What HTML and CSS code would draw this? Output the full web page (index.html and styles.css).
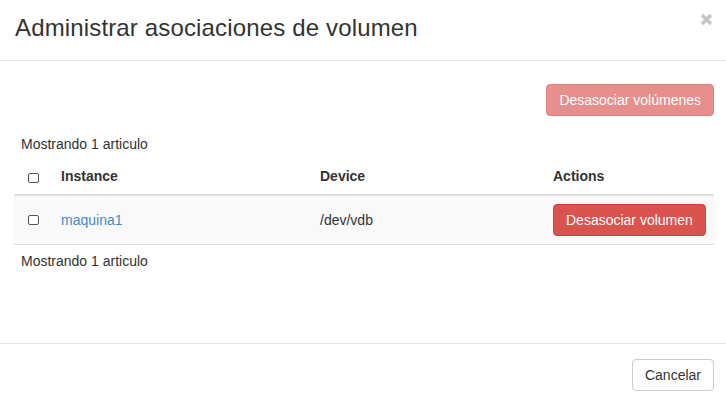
FILE: index.html
```html
<!DOCTYPE html>
<html lang="es">
<head>
<meta charset="utf-8">
<title>Administrar asociaciones de volumen</title>
<link rel="stylesheet" href="styles.css">
</head>
<body>
<div class="modal">
  <div class="modal-header">
    <h3 class="modal-title">Administrar asociaciones de volumen</h3>
    <span class="close" aria-label="Cerrar">
      <svg width="13" height="13" viewBox="0 0 13 13"><path d="M2 2 L11 11 M11 2 L2 11" stroke="#c4c4c4" stroke-width="3.4" stroke-linecap="butt"/></svg>
    </span>
  </div>
  <div class="modal-body">
    <div class="table-actions">
      <button class="btn btn-danger disabled">Desasociar volúmenes</button>
    </div>
    <div class="table-count">Mostrando 1 articulo</div>
    <table class="table">
      <colgroup>
        <col class="c-check">
        <col class="c-inst">
        <col class="c-dev">
        <col class="c-act">
      </colgroup>
      <thead>
        <tr>
          <th><span class="cb"></span></th>
          <th>Instance</th>
          <th>Device</th>
          <th>Actions</th>
        </tr>
      </thead>
      <tbody>
        <tr>
          <td><span class="cb"></span></td>
          <td><a href="#" class="link">maquina1</a></td>
          <td>/dev/vdb</td>
          <td><button class="btn btn-danger">Desasociar volumen</button></td>
        </tr>
      </tbody>
      <tfoot>
        <tr>
          <td colspan="4">Mostrando 1 articulo</td>
        </tr>
      </tfoot>
    </table>
  </div>
  <div class="modal-footer">
    <button class="btn btn-default">Cancelar</button>
  </div>
</div>
</body>
</html>
```

FILE: styles.css
```css
* { box-sizing: border-box; }
html, body {
  margin: 0;
  padding: 0;
  background: #fff;
}
body {
  font-family: "Liberation Sans", Arial, Helvetica, sans-serif;
  font-size: 14px;
  line-height: 20px;
  color: #333;
}
.modal {
  width: 726px;
}
.modal-header {
  position: relative;
  padding: 14px 15px;
  border-bottom: 1px solid #e5e5e5;
  height: 61px;
}
.modal-title {
  margin: 0;
  font-size: 24px;
  font-weight: 400;
  line-height: 28px;
  color: #333;
  letter-spacing: 0.15px;
}
.close {
  position: absolute;
  right: 13px;
  top: 13px;
  width: 13px;
  height: 13px;
  display: block;
}
.close svg { display: block; }
.modal-body {
  height: 282px;
  padding: 0 12px 0 14px;
}
.table-actions {
  display: flex;
  justify-content: flex-end;
  padding-top: 23px;
}
.table-count {
  margin-top: 18px;
  padding-left: 7px;
  height: 24px;
}
.btn {
  font-family: "Liberation Sans", Arial, Helvetica, sans-serif;
  font-size: 14px;
  line-height: 20px;
  padding: 5px 12px;
  border: 1px solid transparent;
  border-radius: 4px;
  cursor: pointer;
  display: inline-block;
}
.btn-danger {
  background: #d9534f;
  border-color: #d43f3a;
  color: #fff;
}
.btn-danger.disabled {
  background: #e68f8c;
  border-color: #e37f7c;
  color: #fff;
  cursor: not-allowed;
}
.btn-default {
  background: #fff;
  border-color: #ccc;
  color: #333;
}
.table {
  width: 700px;
  border-collapse: collapse;
  table-layout: fixed;
}
.c-check { width: 39px; }
.c-inst { width: 259px; }
.c-dev { width: 233px; }
.c-act { width: 169px; }
.table th {
  text-align: left;
  font-weight: 700;
  padding: 8px;
  border-bottom: 2px solid #ddd;
  line-height: 20px;
  vertical-align: bottom;
}
.table tbody td {
  padding: 8px;
  background: #f9f9f9;
  vertical-align: middle;
  line-height: 20px;
  height: 48px;
}
.table tfoot td {
  border-top: 1px solid #ddd;
  padding: 6px 7px 8px;
  line-height: 20px;
}
.cb {
  display: block;
  width: 11px;
  height: 10px;
  margin-left: 6px;
  border: 1px solid #555;
  border-radius: 2px;
  background: #fff;
}
th .cb { margin-top: 7px; margin-bottom: 3px; }
.link {
  color: #428bca;
  text-decoration: none;
}
.modal-footer {
  border-top: 1px solid #e5e5e5;
  padding: 15px 12px 15px 15px;
  display: flex;
  justify-content: flex-end;
}
```
